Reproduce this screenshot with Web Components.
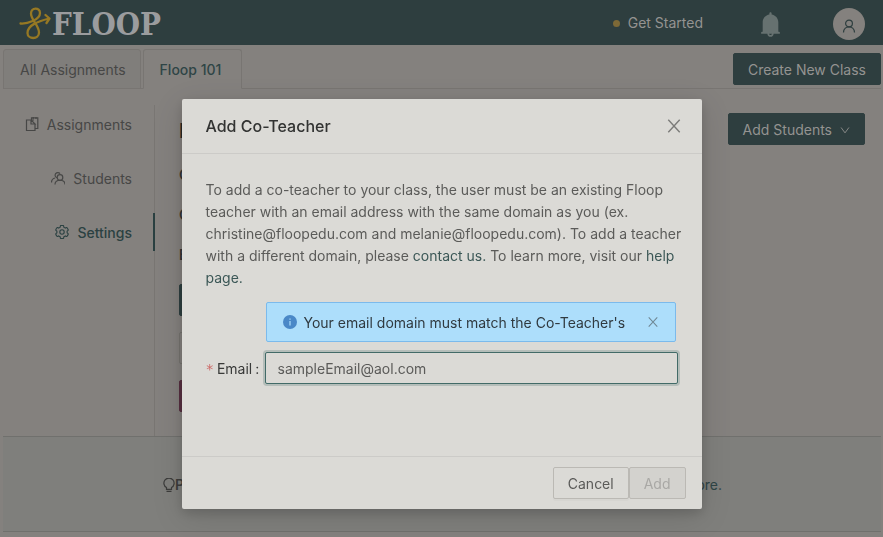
<!DOCTYPE html>
<html lang="en">
<head>
<meta charset="utf-8">
<title>Floop - Add Co-Teacher</title>
<style>
    html, body {
        margin: 0;
        min-height: 100%;
    }
    body {
        background: #84817e;
        color: #474746;
        font-family: Inter, "Liberation Sans", sans-serif;
        font-size: 14px;
        line-height: 22px;
    }
</style>
</head>
<body>
<fl-app></fl-app>

<script>
const ICONS = {
    copy: '<path d="M10 4H2.500V14.500H11V7.500M7.500 4V1.800H13.800V12.500H11M9.200 1V3M12 1V3M7 4.500V8H11L7.500 4.300"/>',
    team: '<circle cx="10" cy="7.500" r="2.800"/><path d="M5 14.500C5 8.800 15 8.800 15 14.500M7 7.800A2.700 2.700 0 1 1 10 3.600M1.500 12.500C1.500 10 3 8.500 5 8"/>',
    user: '<circle cx="8" cy="5.500" r="3.400"/><path d="M2.500 14.500C2.800 7 13.200 7 13.500 14.500"/>',
    gear: '<g transform="scale(.015625) translate(31 31) scale(.94)" stroke-width="76"><path d="M924.8 625.7l-65.500-56c3.100-19 4.700-38.400 4.700-57.800s-1.600-38.800-4.700-57.800l65.500-56a32 32 0 0 0 9.300-35.200l-.9-2.600a443.700 443.700 0 0 0-79.700-137.900l-1.800-2.100a32 32 0 0 0-35.100-9.500l-81.300 28.900c-30-24.600-63.500-44-99.700-57.600l-15.700-85a32 32 0 0 0-25.800-25.700l-2.700-.5c-52.100-9.400-106.900-9.400-159 0l-2.700.5a32 32 0 0 0-25.800 25.700l-15.800 85.400a351.900 351.900 0 0 0-99 57.400l-81.900-29.100a32 32 0 0 0-35.100 9.500l-1.800 2.100a446 446 0 0 0-79.700 137.900l-.9 2.600c-4.500 12.500-.8 26.500 9.300 35.200l66.300 56.600c-3.100 18.800-4.600 38-4.600 57.100 0 19.200 1.500 38.400 4.600 57.100L99 625.500a32 32 0 0 0-9.300 35.200l.9 2.600c18.100 50.400 44.900 96.900 79.700 137.900l1.800 2.100a32 32 0 0 0 35.100 9.500l81.900-29.100c29.800 24.500 63.100 43.900 99 57.400l15.800 85.400a32 32 0 0 0 25.800 25.700l2.700.5a449.400 449.400 0 0 0 159 0l2.700-.5a32 32 0 0 0 25.800-25.700l15.700-85a350 350 0 0 0 99.700-57.600l81.300 28.900a32 32 0 0 0 35.100-9.500l1.800-2.100c34.800-41.100 61.600-87.500 79.700-137.900l.9-2.600c4.500-12.300.8-26.300-9.300-35z"/><circle cx="512" cy="512" r="150"/></g>',
    bulb: '<path d="M5.500 12.300V10.600A5.100 5.100 0 1 1 10.500 10.600V12.300ZM5.500 14.400H10.500"/>',
    close: '<path d="M3 2.500L13 13.500M13 2.500L3 13.500"/>',
    down: '<path d="M2.500 4.500L8 12L13.500 4.500"/>',
    bell: '<path fill="currentColor" stroke="none" transform="scale(.015625)" d="M816 768h-24V428c0-141-104-258-240-277V112c0-22-18-40-40-40s-40 18-40 40v39C336 170 232 287 232 428v340h-24c-18 0-32 14-32 32v32c0 4 4 8 8 8h216c0 62 50 112 112 112s112-50 112-112h216c4 0 8-4 8-8v-32c0-18-14-32-32-32zM512 888c-26 0-48-22-48-48h96c0 26-22 48-48 48z"/>',
    info: '<circle cx="8" cy="8" r="7" fill="currentColor" stroke="none"/><path stroke="#addefb" d="M8 7V11.500M8 4.500V5.800"/>'
};

// small helper: shadow root from a template string
function attach(el, html) {
    const template = document.createElement('template');
    template.innerHTML = '<style>*, *::before, *::after { box-sizing: border-box; }</style>' + html;
    el.attachShadow({ mode: 'open' }).appendChild(template.content.cloneNode(true));
}

class IconComponent extends HTMLElement {
    constructor() {
        super();
        attach(this, `
            <style>
                :host { display: inline-flex; flex: none; width: 14px; height: 14px; }
                svg { width: 100%; height: 100%; }
            </style>
            <svg viewBox="1 1 14 14" fill="none" stroke="currentColor" stroke-width="1.2" aria-hidden="true"></svg>
        `);
    }
    connectedCallback() {
        this.shadowRoot.querySelector('svg').innerHTML = ICONS[this.getAttribute('name')] || '';
    }
}

class ButtonComponent extends HTMLElement {
    constructor() {
        super();
        attach(this, `
            <style>
                :host { display: inline-flex; flex: none; }
                button {
                    display: flex;
                    align-items: center;
                    gap: 8px;
                    height: 32px;
                    padding: 2px 14px 0;
                    border: 1px solid #2e3e3f;
                    border-radius: 2px;
                    background: #2e3e3f;
                    color: #949391;
                    font: inherit;
                    white-space: nowrap;
                }
                :host([kind="default"]) button {
                    background: #dbdad6;
                    border-color: #bbb9b4;
                    color: #5b5b59;
                    box-shadow: 0 2px 0 rgba(0, 0, 0, .02);
                }
                :host([kind="disabled"]) button {
                    background: #d3d2ce;
                    border-color: #bbb9b4;
                    color: #a9a8a5;
                }
                :host([kind="ghost"]) button { background: #84817e; border-color: #75736f; color: #474746; }
                :host([kind="danger"]) button { background: #572f40; border-color: #572f40; }
            </style>
            <button type="button"><slot></slot></button>
        `);
        this.shadowRoot.querySelector('button').disabled = this.getAttribute('kind') === 'disabled';
    }
}

class HeaderComponent extends HTMLElement {
    constructor() {
        super();
        attach(this, `
            <style>
                :host { display: block; background: #2e3e3f; color: #949391; }
                header { display: flex; align-items: center; height: 45px; padding: 0 18px 0 19px; }
                a { color: inherit; text-decoration: none; }
                .logo { display: flex; align-items: center; gap: 1px; height: 45px; }
                .logo svg { width: 32px; height: 34px; margin-top: 2px; }
                .word {
                    padding-top: 3px;
                    color: #9b9c9e;
                    font: bold 31px/42px "DejaVu Serif Condensed", "DejaVu Serif", serif;
                }
                .started { display: flex; align-items: center; gap: 8px; margin-left: auto; padding-top: 1px; }
                .dot { width: 7px; height: 7px; border-radius: 50%; background: #7d6937; }
                .icon { display: flex; padding: 0; border: 0; background: none; color: #667170; }
                .bell { margin: 3px 50px 0 55px; }
                .bell fl-icon { width: 25px; height: 25px; }
                .avatar {
                    align-items: center;
                    justify-content: center;
                    width: 32px;
                    height: 32px;
                    margin-top: 3px;
                    padding-top: 4px;
                    border-radius: 50%;
                    background: #84817e;
                    color: #2e3e3f;
                }
            </style>
            <header>
                <a class="logo" href="#">
                    <svg viewBox="0 0 32 34" fill="none" stroke="#967823" stroke-width="2.300" stroke-linecap="round" stroke-linejoin="round" aria-hidden="true">
                        <path d="M1.500 16.500C8 17 21 13 21 6C21 0 12 0 12 6.500C12 13 20 18 20 25.500C20 33 8.500 32.500 8.500 26C8.500 18 19 14.500 30 11.500M26.500 8L30.500 11.500L27.500 16"/>
                    </svg>
                    <span class="word">FLOOP</span>
                </a>
                <a class="started" href="#"><span class="dot"></span>Get Started</a>
                <button class="icon bell" aria-label="Notifications"><fl-icon name="bell"></fl-icon></button>
                <button class="icon avatar" aria-label="Account"><fl-icon name="user"></fl-icon></button>
            </header>
        `);
    }
}

class TabsComponent extends HTMLElement {
    constructor() {
        super();
        attach(this, `
            <style>
                :host { display: block; }
                nav {
                    display: flex;
                    gap: 2px;
                    height: 40px;
                    border-bottom: 1px solid #787572;
                }
                a {
                    height: 40px;
                    padding: 9px 14px 0 16px;
                    border: 1px solid #787572;
                    border-radius: 3px 3px 0 0;
                    background: #807e7b;
                    color: #474746;
                    text-decoration: none;
                }
                a.active {
                    padding-right: 20px;
                    background: #84817e;
                    border-bottom-color: #84817e;
                    color: #2f4546;
                    font-weight: 500;
                }
                fl-button { margin: 4px 0 0 auto; }
            </style>
            <nav>
                <a href="#">All Assignments</a>
                <a class="active" href="#">Floop 101</a>
                <fl-button>Create New Class</fl-button>
            </nav>
        `);
    }
}

class SideMenuComponent extends HTMLElement {
    constructor() {
        super();
        attach(this, `
            <style>
                :host { display: block; flex: none; width: 152px; border-right: 1px solid #797673; }
                nav { display: flex; flex-direction: column; gap: 16px; }
                a {
                    display: flex;
                    align-items: center;
                    justify-content: flex-end;
                    gap: 8px;
                    height: 38px;
                    padding: 2px 23px 0 0;
                    margin-right: -1px;
                    color: #474746;
                    text-decoration: none;
                }
                a.active { padding-right: 21px; border-right: 2px solid #2a4041; color: #2b4142; font-weight: 500; }
                fl-icon { margin-top: -2px; }
            </style>
            <nav>
                <a href="#"><fl-icon name="copy"></fl-icon>Assignments</a>
                <a href="#"><fl-icon name="team"></fl-icon>Students</a>
                <a class="active" href="#"><fl-icon name="gear"></fl-icon>Settings</a>
            </nav>
        `);
    }
}

class SettingsComponent extends HTMLElement {
    constructor() {
        super();
        attach(this, `
            <style>
                :host { display: flex; flex: 1; justify-content: space-between; align-items: flex-start; padding: 8px 16px 24px 24px; }
                .details { display: flex; flex-direction: column; align-items: flex-start; }
                h2 { margin: 2px 0 17px; color: #262726; font-size: 20px; line-height: 32px; font-weight: 600; }
                p { margin: 0 0 18px; color: #333433; font-weight: 600; }
                .actions { display: flex; flex-direction: column; align-items: flex-start; gap: 16px; }
                fl-icon { width: 10px; height: 10px; }
            </style>
            <div class="details">
                <h2>Floop</h2>
                <p>Class</p>
                <p>Code</p>
                <p>Edit</p>
                <div class="actions">
                    <fl-button>Save</fl-button>
                    <fl-button kind="ghost">Copy</fl-button>
                    <fl-button kind="danger">Delete</fl-button>
                </div>
            </div>
            <fl-button>Add Students <fl-icon name="down"></fl-icon></fl-button>
        `);
    }
}

class TipComponent extends HTMLElement {
    constructor() {
        super();
        attach(this, `
            <style>
                :host { display: block; border: 1px solid #70706d; border-width: 1px 0; background: #7f7f7c; }
                footer { display: flex; align-items: center; justify-content: center; height: 94px; padding-top: 2px; white-space: pre; }
                strong { font-weight: 600; color: #3c3c3b; }
                a { color: #2f4546; text-decoration: none; }
                fl-icon { margin-right: -1px; color: #3c3c3b; }
            </style>
            <footer><fl-icon name="bulb"></fl-icon><strong>Pro Tip: </strong>Add a co-teacher to share your classes and feedback. <a href="#">Click to learn more.</a></footer>
        `);
    }
}

class AlertComponent extends HTMLElement {
    constructor() {
        super();
        attach(this, `
            <style>
                :host {
                    display: flex;
                    align-items: center;
                    gap: 7px;
                    height: 40px;
                    padding: 0 16px;
                    border: 1px solid #7bbaec;
                    border-radius: 2px;
                    background: #addefb;
                    color: #303a40;
                }
                .text { flex: 1; padding-top: 2px; }
                .info { color: #4a88c7; }
                button { display: flex; padding: 0; border: 0; background: none; color: #6f8794; }
                button fl-icon { width: 12px; height: 12px; }
            </style>
            <fl-icon class="info" name="info"></fl-icon>
            <span class="text"><slot></slot></span>
            <button type="button" aria-label="Dismiss"><fl-icon name="close"></fl-icon></button>
        `);
    }
}

class ModalComponent extends HTMLElement {
    constructor() {
        super();
        attach(this, `
            <style>
                :host {
                    position: fixed;
                    inset: 0;
                    display: flex;
                    align-items: flex-start;
                    justify-content: center;
                    padding-top: 99px;
                }
                section {
                    width: 520px;
                    max-width: calc(100% - 32px);
                    border-radius: 2px;
                    background: #dbdad6;
                    color: #5b5b59;
                    box-shadow: 0 4px 12px rgba(0, 0, 0, .15), 0 8px 32px rgba(0, 0, 0, .12);
                }
                header {
                    display: flex;
                    align-items: center;
                    justify-content: space-between;
                    padding: 16px 20px 16px 24px;
                    border-bottom: 1px solid #cccbc8;
                }
                h1 { margin: 0; color: #323332; font-size: 16px; line-height: 22px; font-weight: 500; }
                .close { display: flex; padding: 0; border: 0; background: none; color: #7b7b79; }
                .close fl-icon { width: 16px; height: 16px; }
                .body { padding: 24px 24px 72px; }
                footer { display: flex; justify-content: flex-end; padding: 10px 16px; border-top: 1px solid #cccbc8; }
            </style>
            <section role="dialog" aria-modal="true" aria-labelledby="title">
                <header>
                    <h1 id="title"><slot name="title"></slot></h1>
                    <button class="close" aria-label="Close"><fl-icon name="close"></fl-icon></button>
                </header>
                <div class="body"><slot></slot></div>
                <footer><slot name="footer"></slot></footer>
            </section>
        `);
    }
}

class CoTeacherFormComponent extends HTMLElement {
    constructor() {
        super();
        attach(this, `
            <style>
                :host { display: block; }
                p { margin: 0 -8px 13px 0; padding-top: 1px; }
                a { color: #3b5756; text-decoration: none; }
                form { display: grid; grid-template-columns: 59px 1fr; row-gap: 10px; align-items: center; }
                fl-alert { grid-column: 2; margin: 0 2px 0 1px; }
                label { display: flex; gap: 3px; padding-top: 2px; color: #393a39; white-space: nowrap; }
                label i { color: #cd6b69; font-family: "DejaVu Sans Mono", monospace; font-style: normal; }
                input {
                    width: 100%;
                    height: 32px;
                    padding: 0 11px 0 12px;
                    border: 1px solid #426b68;
                    border-radius: 2px;
                    outline: 0;
                    background: #dbdad6;
                    box-shadow: 0 0 0 2px rgba(66, 107, 104, .25);
                    color: #5b5b59;
                    font: inherit;
                }
            </style>
            <p>To add a co-teacher to your class, the user must be an existing Floop teacher with an email address with the same domain as you (ex. christine@floopedu.com and melanie@floopedu.com). To add a teacher with a different domain, please <a href="#">contact us.</a> To learn more, visit our <a href="#">help page.</a></p>
            <form>
                <fl-alert>Your email domain must match the Co-Teacher's</fl-alert>
                <label for="email"><i>*</i><span>Email</span><span>:</span></label>
                <input id="email" type="email" value="sampleEmail@aol.com">
            </form>
        `);
    }
}

class AppComponent extends HTMLElement {
    constructor() {
        super();
        attach(this, `
            <style>
                :host { display: block; }
                main { padding: 4px 2px 4px 3px; }
                .columns { display: flex; padding-top: 16px; }
            </style>
            <fl-header></fl-header>
            <main>
                <fl-tabs></fl-tabs>
                <div class="columns">
                    <fl-side-menu></fl-side-menu>
                    <fl-settings></fl-settings>
                </div>
                <fl-tip></fl-tip>
            </main>
            <fl-modal>
                <span slot="title">Add Co-Teacher</span>
                <fl-co-teacher-form></fl-co-teacher-form>
                <fl-button slot="footer" kind="default">Cancel</fl-button>
                <fl-button slot="footer" kind="disabled">Add</fl-button>
            </fl-modal>
        `);
    }
}

window.customElements.define('fl-icon', IconComponent);
window.customElements.define('fl-button', ButtonComponent);
window.customElements.define('fl-header', HeaderComponent);
window.customElements.define('fl-tabs', TabsComponent);
window.customElements.define('fl-side-menu', SideMenuComponent);
window.customElements.define('fl-settings', SettingsComponent);
window.customElements.define('fl-tip', TipComponent);
window.customElements.define('fl-alert', AlertComponent);
window.customElements.define('fl-modal', ModalComponent);
window.customElements.define('fl-co-teacher-form', CoTeacherFormComponent);
window.customElements.define('fl-app', AppComponent);
</script>
</body>
</html>
